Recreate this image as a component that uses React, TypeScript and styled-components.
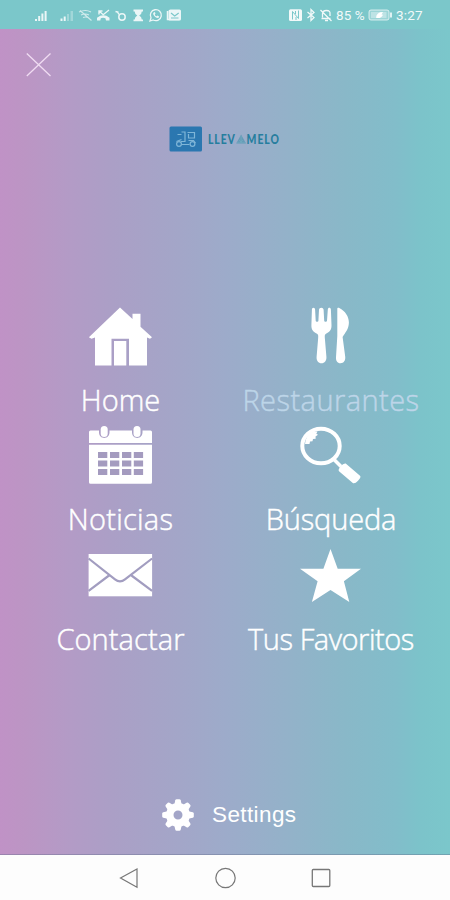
import React from "react";
import styled, { createGlobalStyle } from "styled-components";

const GlobalStyle = createGlobalStyle`
  html, body { margin: 0; padding: 0; }
`;

const Screen = styled.div`
  width: 450px;
  height: 900px;
  display: flex;
  flex-direction: column;
  overflow: hidden;
  color: #fff;
  font-family: "Open Sans", "Noto Sans", sans-serif;
`;

const StatusBar = styled.header`
  height: 29px;
  flex: none;
  box-sizing: border-box;
  padding: 1px 26px 0 34px;
  display: flex;
  align-items: center;
  justify-content: space-between;
  background: #7bc7ca;
`;

const StatusText = styled.span<{ $width: number; $spacing: number }>`
  width: ${(p) => p.$width}px;
  font: 400 13.5px/16px Roboto, sans-serif;
  letter-spacing: ${(p) => p.$spacing}px;
  white-space: nowrap;
  opacity: 0.9;
`;

const StatusSide = styled.div`
  display: flex;
  align-items: center;
`;

const Menu = styled.main`
  height: 826px;
  flex: none;
  box-sizing: border-box;
  border-bottom: 1px solid rgba(100, 110, 140, 0.4);
  display: flex;
  flex-direction: column;
  background: linear-gradient(
    90deg,
    #c092c6 0,
    #bc95c4 24px,
    #b39bc6 70px,
    #ab9fc6 112px,
    #a3a6c8 180px,
    #9dabca 225px,
    #93b2c9 290px,
    #89b8c8 345px,
    #82bdca 395px,
    #7cc3ca 420px,
    #7bc7cb 450px
  );
`;

const CloseButton = styled.button`
  width: 26px;
  height: 26px;
  margin: 23px 0 0 26px;
  padding: 0;
  border: 0;
  background: none;
  display: flex;
`;

const Brand = styled.div`
  height: 26px;
  margin: 48px 0 0 169px;
  display: flex;
  align-items: center;
  gap: 5px;
`;

const BrandName = styled.span`
  display: flex;
  align-items: center;
  color: #267e9e;
  font: 900 13.5px/16px Lato, sans-serif;
  letter-spacing: 1.2px;
  transform: scaleX(0.77);
  transform-origin: left center;
`;

const Grid = styled.nav`
  margin: 152px 14px 0 15px;
  display: grid;
  grid-template-columns: 210px 211px;
  grid-auto-rows: 119.4px;
`;

const Item = styled.a`
  display: flex;
  flex-direction: column;
  align-items: center;
`;

const Label = styled.span<{ $muted?: boolean; $spacing: number }>`
  margin: 9px 0 0 1px;
  font-size: 29px;
  line-height: 41px;
  font-weight: 300;
  white-space: nowrap;
  letter-spacing: ${(p) => p.$spacing}px;
  color: ${(p) => (p.$muted ? "#bdd5e8" : "#fff")};
  -webkit-text-stroke: 0.45px currentColor;
`;

const Settings = styled.a`
  margin: 136px 0 0 161px;
  display: flex;
  align-items: center;
  gap: 17px;
  font: 400 22.5px/34px "Liberation Sans", Arial, sans-serif;
  letter-spacing: 0.4px;
`;

const NavBar = styled.footer`
  height: 45px;
  flex: none;
  box-sizing: border-box;
  padding: 0 118px;
  display: flex;
  align-items: center;
  justify-content: space-between;
  background: #fdfdfd;
`;

const Glyph = ({ children }: { children: React.ReactNode }) => (
  <svg width="70" height="66" viewBox="0 0 70 66" fill="#fff">{children}</svg>
);

const HomeIcon = () => (
  <Glyph>
    <path d="M35 3.500 47.500 15V9.700h8v13L67 33.200l-2 1.600-3-1.300v28H44V34.700H26.500v26.800H10V33.500l-3.500 1.300-2.600-1.600Z" />
    <path d="M29 37h12.300v24.500H29Z" />
  </Glyph>
);

const CutleryIcon = () => (
  <Glyph>
    <path d="M17.500 3.700c-1 0-1.600.8-1.600 2L15.400 21c-.2 5 2 6.800 5.600 8.700 1.500.8 1.300 2.500 1.100 5l-1.500 18c-.3 4 1.800 6.500 4.900 6.500s5.200-2.500 4.900-6.500l-1.500-18c-.2-2.500-.4-4.200 1.100-5 3.600-1.900 5.700-3.700 5.500-8.700L34.900 5.700c-.1-2.600-3-2.600-3.100 0L31 16.700c-.2 1.500-2.700 1.500-2.800 0l-.6-11c-.1-2.700-4.500-2.700-4.600 0l-.6 11c-.1 1.500-2.500 1.500-2.700 0l-.6-11c0-1.200-.7-2-1.600-2Z" />
    <path d="M41.300 4.800c0-1 1-1.300 2-.8C49.200 7 52.900 12.500 52.900 18.500c0 6.500-3.900 10.500-6.300 14.500L49.200 52.500c.5 4-1.500 6.700-4.700 6.700s-4.700-2.500-4.500-6L41.300 32Z" />
  </Glyph>
);

const CalendarIcon = () => (
  <Glyph>
    <path d="M5.500 7.500H14v1.800c0 7.600 10.500 7.600 10.500 0V7.500H47v1.800c0 7.600 10.500 7.600 10.500 0V7.500H65.500q1.500 0 1.500 1.500V20H4V9q0-1.500 1.500-1.500ZM4 21.700H67V59.300q0 1.500-1.500 1.500h-60Q4 60.800 4 59.300Z" />
    <rect x="15.700" y="3" width="7" height="11" rx="3.500" />
    <rect x="48.500" y="3" width="7" height="11" rx="3.500" />
    {[29, 37.5, 46].map((y) =>
      [13, 25, 37, 48.8].map((x) => (
        <rect key={x + "-" + y} x={x} y={y} width="9.300" height="6" fill="#a49bbf" />
      )),
    )}
  </Glyph>
);

const SearchIcon = () => (
  <Glyph>
    <ellipse cx="25" cy="23" rx="18.700" ry="17.300" fill="none" stroke="#fff" strokeWidth="4" />
    <path d="M9 21C10 12 15 8 21.500 8.500l-1.200 2.300 1.700 1-2.500 1.800.2 2.200-2.700.2-.5 2.200-2.500.3-.5 2.500Z" />
    <path d="M37.500 36 45 43.500" stroke="#fff" strokeWidth="3.500" />
    <path d="M49.700 40.500Q47.500 40 44.500 43.500T43.300 48.500L56.500 59.800Q58.500 61.500 62 57.800T64 52.800Z" />
  </Glyph>
);

const MailIcon = () => (
  <Glyph>
    <rect x="3.600" y="11" width="63.500" height="42.300" />
    <path d="M3.600 15.500 30 36.300Q35 40.300 40 36.300L67.100 15.500M24 32.500 3.600 47.800M46.500 32.500 67.100 47.800" fill="none" stroke="#a29dc0" strokeWidth="2.200" />
  </Glyph>
);

const StarIcon = () => (
  <Glyph>
    <path d="M34.500 6 41.700 25.700H65L47.900 38.300 53.300 59 34.500 47 15.900 59 21.600 38.300 4 25.700H27.400Z" />
  </Glyph>
);

const GearIcon = () => (
  <svg width="34" height="34" viewBox="-17 -17 34 34" fill="#fff">
    {[0, 45, 90, 135, 180, 225, 270, 315].map((a) => (
      <path key={a} d="M-4-9-2.700-14.800Q-2.400-15.800-1.400-15.800H1.400Q2.400-15.800 2.700-14.800L4-9Z" transform={`rotate(${a})`} />
    ))}
    <circle r="8.200" fill="none" stroke="#fff" strokeWidth="7.400" />
  </svg>
);

const StatusIcons = () => (
  <svg width="150" height="18" viewBox="34 6 150 18" fill="#fff" stroke="none">
    <g opacity=".85">
      <path d="M35 19h2v2h-2Zm3.200-3h2v5h-2Zm3.200-2.500h2V21h-2ZM44.600 11h2v10h-2Z" />
      <path d="M60.500 18.500h2V21h-2Zm3.200-2h2V21h-2Z" />
      <path d="M67 14h2v7h-2Zm3.500-3h2.500v10h-2.500Z" opacity=".35" />
      <g fill="none" stroke="#fff" strokeWidth="1.200" opacity=".75">
        <path d="M79 12q6.500-3 12 0M81 15q4-2 8 0M83 17.500q2.500-1 5 0M80 10.500 91.500 20.500" />
      </g>
      <path d="M97 20.500v-2.800q6.500-4.800 12.500 0v2.800h-3.500l-.6-2.300q-2.500-1-4.600 0l-.5 2.300Z" />
      <path d="M99 14.500V11h3.500M99 11l4.200 3.700L109 10" fill="none" stroke="#fff" strokeWidth="1.400" />
      <circle cx="122" cy="17" r="3.200" fill="none" stroke="#fff" strokeWidth="1.500" />
      <path d="M115.500 11.500l3 .8M119 14.500l-1.600-2.600" stroke="#fff" strokeWidth="1.400" />
      <path d="M133.500 9.500h9.500v2h-1.200q0 2.700-2.600 4 2.600 1.300 2.600 4h1.200v1.800h-9.500v-1.800h1.200q0-2.700 2.600-4-2.600-1.300-2.600-4h-1.200Z" />
      <path d="M150 21l1-3.200A5.500 5.500 0 1 1 153.200 20Z" fill="none" stroke="#fff" strokeWidth="1.300" />
      <path d="M153.700 12.500q-1.500 1.200.8 3.800t4.400 1.300l.3-1.200-1.700-.9-1 .8q-1.300-.6-1.700-1.900l.7-.8-.6-1.500Z" />
      <path d="M167.500 11v8.500h12" fill="none" stroke="#fff" strokeWidth="1.500" />
      <path d="M170.500 9.500h9q1.500 0 1.500 1.500v8q0 1.500-1.500 1.500h-10Q168.500 20.500 168.500 19v-8q0-1.500 2-1.500Z" />
      <path d="M171 13l3.700 3 4-3M171 18h7.500" fill="none" stroke="#7bc7ca" strokeWidth="1.200" />
    </g>
  </svg>
);

const DeviceIcons = () => (
  <svg width="48" height="18" viewBox="288 6 48 18">
    <g fill="none" stroke="#fff" strokeWidth="1.300" opacity=".9">
      <rect x="289" y="9.300" width="13" height="11.700" rx="1.500" fill="#fff" stroke="none" />
      <path d="M292.500 19.500v-8l6 7v-8M295.500 11v3M296 17v3" stroke="#7bc7ca" strokeWidth="1" />
      <path d="M307.500 12l6.500 5.500-3 3V9.500l3 3-6.500 5.500" />
      <path d="M322.500 17.500V14q0-3.500 4-3.500t3.500 3.500v2M321.500 18.500h9M325 20.500h3M320.500 10l11 11" />
    </g>
  </svg>
);

const BatteryIcon = styled.svg`
  margin-right: 3px;
`;

const Battery = () => (
  <BatteryIcon width="25" height="14" viewBox="0 0 25 14">
    <rect x="1" y="2" width="20" height="10" rx="2" fill="#fff" fillOpacity=".25" stroke="#fff" strokeOpacity=".65" />
    <rect x="3" y="4" width="15.500" height="6" fill="#fff" opacity=".35" />
    <path d="M8 9.800Q8.500 4 15 4l-1.500 2.500 1.500.2Q13 11 8 9.800Z" fill="#fff" />
    <path d="M23 4.500v5" stroke="#fff" strokeWidth="1.500" />
  </BatteryIcon>
);

const BrandMark = () => (
  <svg width="34" height="26" viewBox="0 0 34 26">
    <rect x=".5" y=".5" width="32.500" height="25" rx="1.500" fill="#2b77b0" />
    <g fill="none" stroke="#7fb6d8" strokeWidth="1.200">
      <path d="M7.500 15.500 12.500 13.500M8.500 8.500h4M12.500 6h3.500v9.500H12M18.500 6.500H25.500V12H19.500V8M12.500 18.500h8M19.500 14.500h5l2 2.500" />
      <circle cx="10" cy="18" r="2.400" />
      <circle cx="23.500" cy="18" r="2.400" />
    </g>
  </svg>
);

const BrandTriangle = () => (
  <svg width="14" height="10" viewBox="0 0 11 10" preserveAspectRatio="none">
    <path d="M5.500.5 10.500 9.500H.5Z" fill="#438fac" fillOpacity=".6" />
    <path d="M5.500 2v7M3.500 6l2 2 2-2M1 8.800h9" stroke="#72abc0" fill="none" strokeWidth=".8" />
  </svg>
);

const items = [
  { label: "Home", Icon: HomeIcon, spacing: 0 },
  { label: "Restaurantes", Icon: CutleryIcon, spacing: 0.45, muted: true },
  { label: "Noticias", Icon: CalendarIcon, spacing: 0.25 },
  { label: "Búsqueda", Icon: SearchIcon, spacing: -0.15 },
  { label: "Contactar", Icon: MailIcon, spacing: 0.1 },
  { label: "Tus Favoritos", Icon: StarIcon, spacing: -0.45 },
];

export default function App() {
  return (
    <Screen>
      <GlobalStyle />
      <StatusBar>
        <StatusIcons />
        <StatusSide>
          <DeviceIcons />
          <StatusText $width={32} $spacing={0.1}>85 %</StatusText>
          <Battery />
          <StatusText $width={28} $spacing={0.2}>3:27</StatusText>
        </StatusSide>
      </StatusBar>
      <Menu>
        <CloseButton aria-label="Cerrar">
          <svg width="26" height="26" viewBox="0 0 26 26" stroke="#f0dcf2" strokeWidth="1.300">
            <path d="M.8 1.500 24.500 24M24.500 1.500.8 24" />
          </svg>
        </CloseButton>
        <Brand>
          <BrandMark />
          <BrandName>LLEV<BrandTriangle />MELO</BrandName>
        </Brand>
        <Grid>
          {items.map(({ label, Icon, spacing, muted }) => (
            <Item key={label}>
              <Icon />
              <Label $muted={muted} $spacing={spacing}>{label}</Label>
            </Item>
          ))}
        </Grid>
        <Settings>
          <GearIcon />
          Settings
        </Settings>
      </Menu>
      <NavBar>
        <svg width="22" height="22" viewBox="0 0 22 22" fill="none" stroke="#777" strokeWidth="1.200">
          <path d="M2.500 11 19 2v18.200Z" />
        </svg>
        <svg width="22" height="22" viewBox="0 0 22 22" fill="none" stroke="#777" strokeWidth="1.200">
          <circle cx="11.500" cy="11" r="9.700" />
        </svg>
        <svg width="22" height="22" viewBox="0 0 22 22" fill="none" stroke="#777" strokeWidth="1.300">
          <rect x="2.300" y="2.500" width="17.500" height="17" rx="1" />
        </svg>
      </NavBar>
    </Screen>
  );
}
